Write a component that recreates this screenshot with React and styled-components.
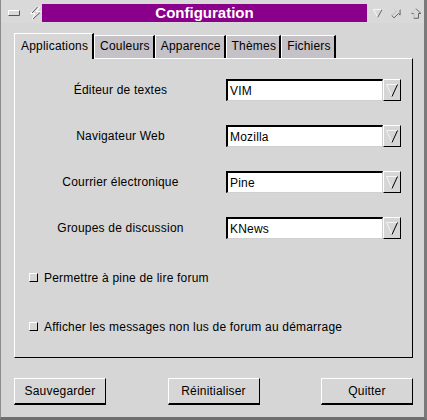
import React, { useState } from "react";
import styled, { createGlobalStyle } from "styled-components";

const GlobalStyle = createGlobalStyle`
  html, body {
    margin: 0;
    padding: 0;
    background: #d6d6d6;
  }
  * {
    box-sizing: border-box;
  }
`;

const fields = [
  { label: "Éditeur de textes", value: "VIM" },
  { label: "Navigateur Web", value: "Mozilla" },
  { label: "Courrier électronique", value: "Pine" },
  { label: "Groupes de discussion", value: "KNews" },
];

const options = [
  "Permettre à pine de lire forum",
  "Afficher les messages non lus de forum au démarrage",
];

const tabs = ["Applications", "Couleurs", "Apparence", "Thèmes", "Fichiers"];

const App = () => {
  const [active, setActive] = useState(0);
  const [checked, setChecked] = useState([false, false]);

  const toggle = (i) => {
    const next = [...checked];
    next[i] = !next[i];
    setChecked(next);
  };

  return (
    <>
      <GlobalStyle />
      <Window>
        <TitleBar>
          <Controls>
            <svg width="12" height="6" viewBox="0 0 12 6">
              <path d="M0.5 5.5 V0.5 H11.5" stroke="#fff" fill="none" />
              <path d="M11.5 0.5 V5.5 H0.5" stroke="#555" fill="none" />
            </svg>
            <svg width="13" height="14" viewBox="0 0 13 14">
              <path
                d="M8 0.5 L1.5 7.5 H6 L3 13.5 L11.5 5.5 H7 L11 0.5"
                stroke="#fff"
                fill="none"
              />
              <path d="M8.5 1 L3 7 M4 13 L11 6.5" stroke="#555" fill="none" />
            </svg>
          </Controls>
          <Title>Configuration</Title>
          <Controls $right>
            <svg width="12" height="12" viewBox="0 0 12 12">
              <path d="M0.5 1.5 H11.5" stroke="#fff" fill="none" />
              <path d="M0.5 1.5 L6 11.5" stroke="#fff" fill="none" />
              <path d="M11.5 1.5 L6 11.5" stroke="#444" fill="none" />
            </svg>
            <svg width="13" height="13" viewBox="0 0 13 13">
              <path
                d="M1 9 L6.5 3.5 L4.5 1.5 H11.5 V8.5 L9.5 6.5 L4 12 Z"
                stroke="#444"
                fill="none"
              />
              <path d="M1 9 L6.5 3.5 L4.5 1.5 H11.5" stroke="#fff" fill="none" />
            </svg>
            <svg width="13" height="13" viewBox="0 0 13 13">
              <path
                d="M6.5 0.5 L12.5 6.5 H9.5 V12.5 H3.5 V6.5 H0.5 Z"
                stroke="#444"
                fill="none"
              />
              <path d="M0.5 6.5 L6.5 0.5 M3.5 6.5 V12.5" stroke="#fff" fill="none" />
            </svg>
          </Controls>
        </TitleBar>

        <Body>
          <TabStrip>
            {tabs.map((t, i) => (
              <Tab key={t} $active={i === active} onClick={() => setActive(i)}>
                {t}
              </Tab>
            ))}
          </TabStrip>

          <Panel>
            {fields.map((f) => (
              <FieldRow key={f.label}>
                <Label>{f.label}</Label>
                <Combo>
                  <ComboField>{f.value}</ComboField>
                  <ComboButton>
                    <svg width="12" height="15" viewBox="0 0 12 15">
                      <path d="M0.5 1.5 H11.5" stroke="#f4f4f4" fill="none" />
                      <path d="M0.5 1.5 L6 13.5" stroke="#f4f4f4" fill="none" />
                      <path d="M11.5 1.5 L6 13.5" stroke="#000" fill="none" />
                    </svg>
                  </ComboButton>
                </Combo>
              </FieldRow>
            ))}
            <CheckList>
              {options.map((o, i) => (
                <CheckRow key={o} onClick={() => toggle(i)}>
                  <CheckBox $on={checked[i]} />
                  <span>{o}</span>
                </CheckRow>
              ))}
            </CheckList>
          </Panel>

          <ButtonRow>
            <Button>Sauvegarder</Button>
            <Button>Réinitialiser</Button>
            <Button>Quitter</Button>
          </ButtonRow>
        </Body>
      </Window>
    </>
  );
};

const Window = styled.div`
  width: 427px;
  height: 420px;
  background: #d6d6d6;
  border-left: 1px solid #8c8c8c;
  border-right: 3px solid #7a7a7a;
  border-bottom: 3px solid #6e6e6e;
  font-family: "Liberation Sans", Arial, sans-serif;
  font-size: 12px;
  letter-spacing: 0.2px;
  color: #000;
  display: flex;
  flex-direction: column;
`;

const TitleBar = styled.div`
  height: 23px;
  display: flex;
  align-items: center;
  padding-top: 3px;
  background: #d9d9d9;
`;

const Controls = styled.div`
  width: ${(p) => (p.$right ? "57px" : "41px")};
  display: flex;
  align-items: center;
  justify-content: ${(p) => (p.$right ? "space-between" : "flex-start")};
  gap: 9px;
  padding: ${(p) => (p.$right ? "0 3px 0 6px" : "0 0 0 7px")};
`;

const Title = styled.div`
  flex: 1;
  height: 18px;
  background: #8b008b;
  color: #fff;
  font-weight: bold;
  font-size: 15px;
  letter-spacing: 0;
  line-height: 18px;
  text-align: center;
`;

const Body = styled.div`
  padding: 10px 11px 0 13px;
  display: flex;
  flex-direction: column;
`;

const TabStrip = styled.div`
  display: flex;
  align-items: flex-end;
  height: 25px;
`;

const Tab = styled.div`
  height: ${(p) => (p.$active ? "26px" : "23px")};
  margin-bottom: ${(p) => (p.$active ? "-1px" : "0")};
  position: relative;
  z-index: ${(p) => (p.$active ? 1 : 0)};
  padding: ${(p) => (p.$active ? "5px 4px 0 6px" : "3px 3px 0 5px")};
  background: ${(p) => (p.$active ? "#d6d6d6" : "#c4c2c7")};
  border-top: 1px solid #fff;
  border-left: 1px solid #fff;
  border-right: 2px solid #000;
  cursor: default;
  white-space: nowrap;
`;

const Panel = styled.div`
  width: 399px;
  height: 300px;
  border-top: 1px solid #fff;
  border-left: 1px solid #fff;
  border-right: 1px solid #000;
  border-bottom: 1px solid #000;
  padding: 8px 10px 0 0;
  display: flex;
  flex-direction: column;
`;

const FieldRow = styled.div`
  height: 46px;
  display: grid;
  grid-template-columns: 211px 1fr;
  align-items: center;
`;

const Label = styled.div`
  text-align: center;
`;

const Combo = styled.div`
  display: flex;
  height: 22px;
`;

const ComboField = styled.div`
  width: 157px;
  background: #fff;
  border-top: 2px solid #000;
  border-left: 2px solid #000;
  border-bottom: 1px solid #d0d0d0;
  border-right: 1px solid #d0d0d0;
  padding: 2px 0 0 2px;
  line-height: 16px;
`;

const ComboButton = styled.div`
  width: 18px;
  background: #d6d6d6;
  border-top: 1px solid #fff;
  border-left: 1px solid #fff;
  border-right: 1px solid #000;
  border-bottom: 1px solid #000;
  display: flex;
  align-items: center;
  justify-content: center;
`;

const CheckList = styled.div`
  padding-top: 2px;
  display: flex;
  flex-direction: column;
`;

const CheckRow = styled.div`
  height: 49px;
  display: flex;
  align-items: center;
  gap: 6px;
  padding-left: 14px;
  cursor: default;
`;

const CheckBox = styled.span`
  width: 9px;
  height: 9px;
  background: ${(p) => (p.$on ? "#8b008b" : "#d6d6d6")};
  border-top: 1px solid #fff;
  border-left: 1px solid #fff;
  border-right: 1px solid #000;
  border-bottom: 1px solid #000;
`;

const ButtonRow = styled.div`
  margin-top: 20px;
  width: 399px;
  display: flex;
  justify-content: space-between;
`;

const Button = styled.button`
  width: 92px;
  height: 27px;
  font-family: "Liberation Sans", Arial, sans-serif;
  font-size: 12px;
  letter-spacing: 0.2px;
  color: #000;
  background: #d6d6d6;
  border-top: 1px solid #fff;
  border-left: 1px solid #fff;
  border-right: 1px solid #000;
  border-bottom: 2px solid #000;
  padding: 0;
  cursor: pointer;
`;

export default App;
